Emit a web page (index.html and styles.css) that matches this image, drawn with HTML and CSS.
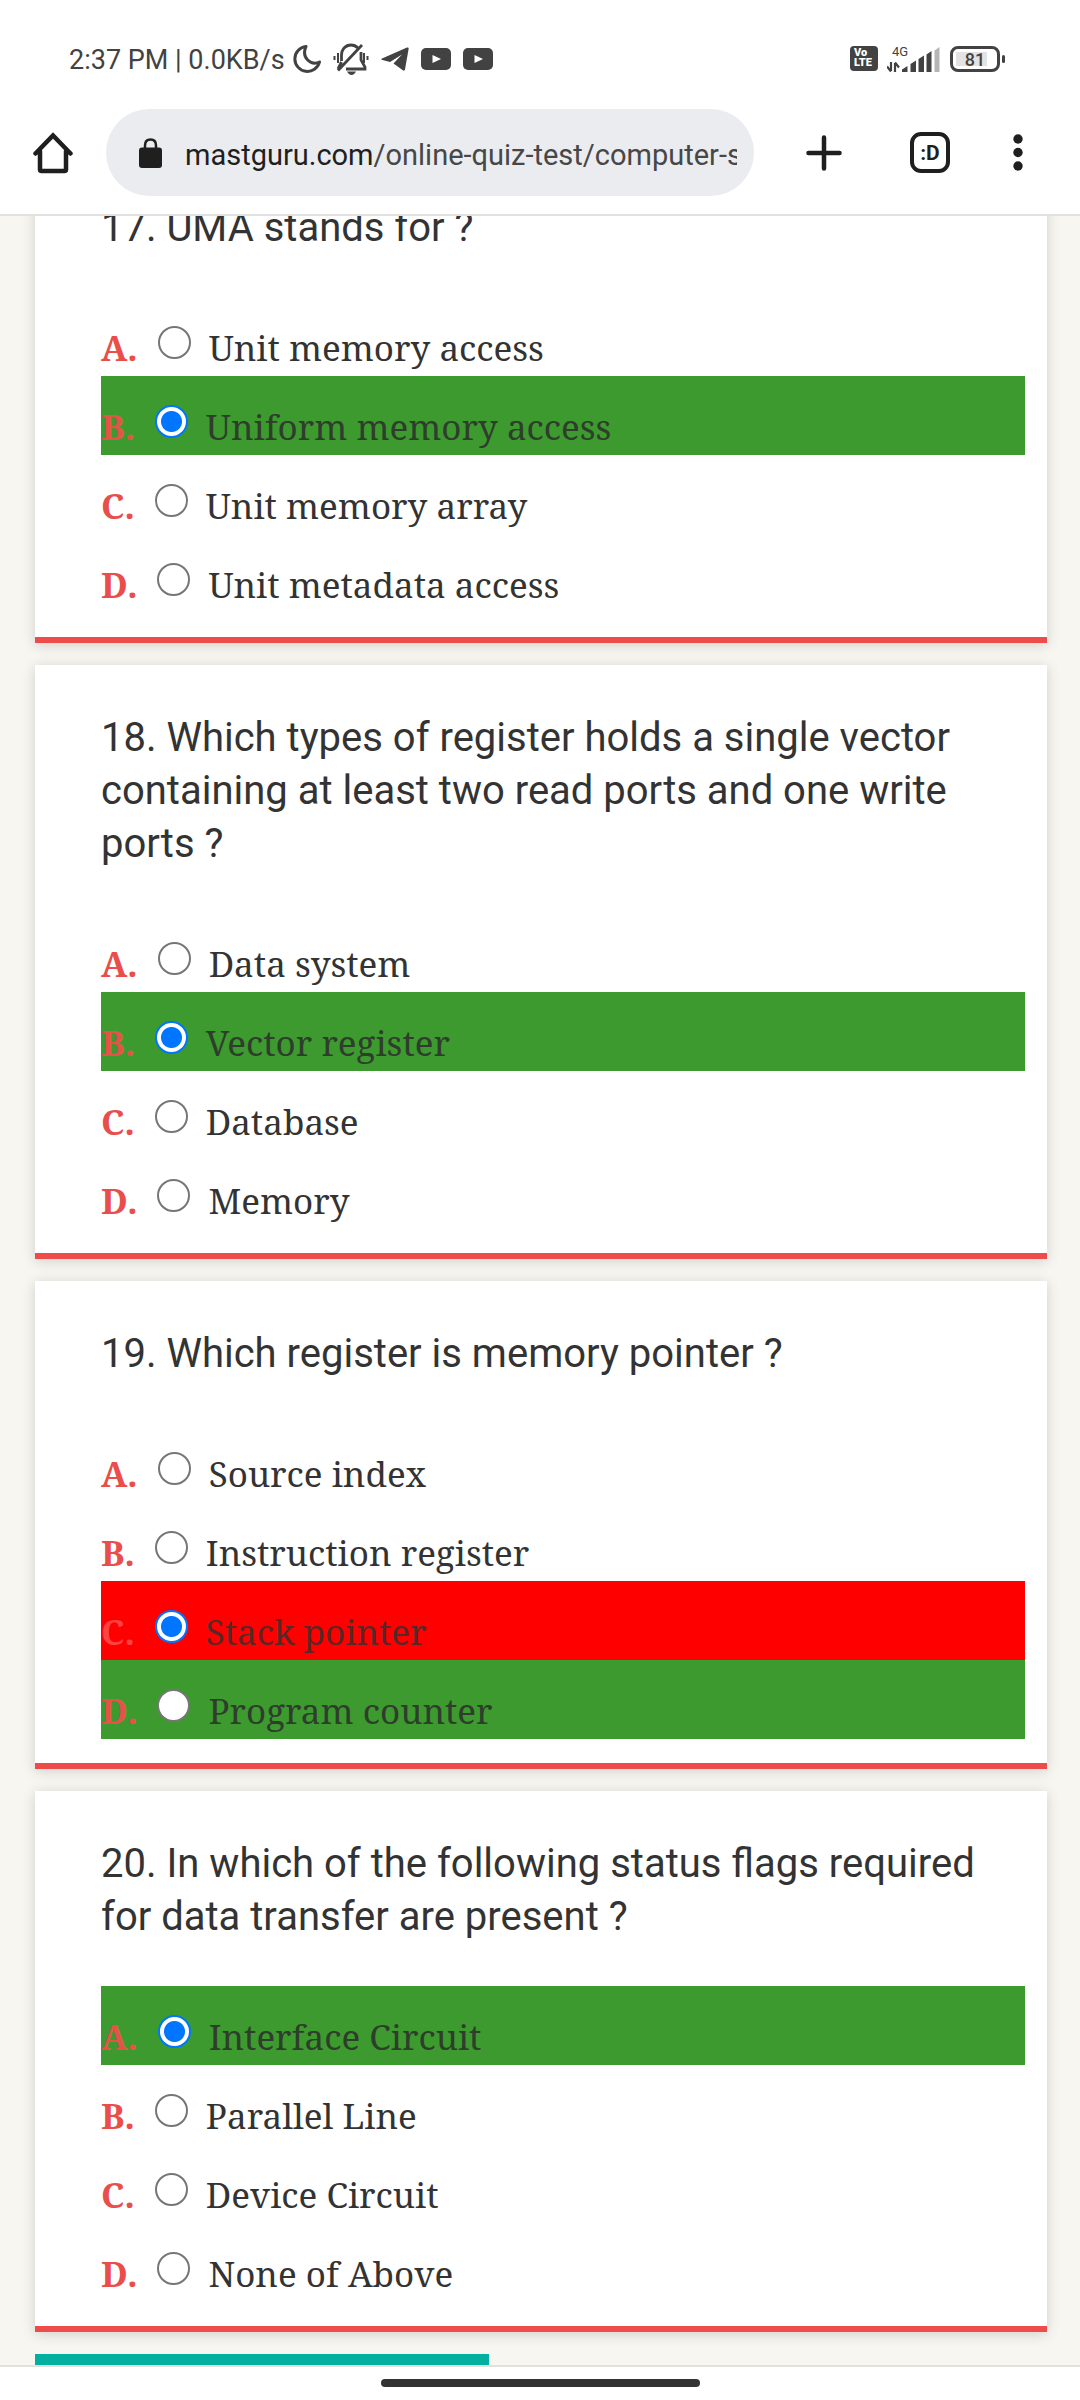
FILE: index.html
```html
<!DOCTYPE html>
<html lang="en">
<head>
<meta charset="utf-8">
<meta name="viewport" content="width=device-width, initial-scale=1">
<title>Computer quiz - mastguru.com</title>
<link rel="stylesheet" href="styles.css">
</head>
<body>
<header class="chrome">
  <div class="status">
    <span class="clock">2:37 PM | 0.0KB/s</span>
    <div class="notices">
      <svg class="moon" width="28" height="30" viewBox="0 0 28 30" aria-hidden="true"><path d="M13 2.500A12.500 12.500 0 1 0 26.500 18C18 22 8 14 13 2.500Z" fill="none" stroke="#424242" stroke-width="3" stroke-linejoin="round"/></svg>
      <svg class="bell" width="36" height="32" viewBox="0 0 36 32" aria-hidden="true"><g fill="none" stroke="#424242" stroke-width="2.800"><path d="M11 5C15 1 21 1 25 5M8.500 18V12Q8.500 8 11 5M28 9V17L32 24V26H13M5 27.500L29 2M5 26L8.500 19"/><path d="M1.500 13V17M5 10V20M31 10V20M34.500 13V17" stroke-width="2"/></g><path d="M14 28.500H23Q21 32 18.500 32T14 28.500Z" fill="#424242"/></svg>
      <svg class="plane" width="28" height="24" viewBox="0 0 28 24" aria-hidden="true"><path d="M1 11.500 26 .6Q28 0 27.600 2L24 22.500Q23.500 24.500 21.500 23L12.500 16.500 21 7.500 9 15 1.500 13Q-.5 12.300 1 11.500Z" fill="#424242"/></svg>
      <svg class="tube" width="30" height="22" viewBox="0 0 30 22" aria-hidden="true"><rect width="30" height="22" rx="5" fill="#424242"/><path d="M11.500 7 20 11l-8.500 4Z" fill="#fff"/></svg>
      <svg class="tube" width="30" height="22" viewBox="0 0 30 22" aria-hidden="true"><rect width="30" height="22" rx="5" fill="#424242"/><path d="M11.500 7 20 11l-8.500 4Z" fill="#fff"/></svg>
    </div>
    <div class="radios">
      <span class="volte"><span>Vo</span><span>LTE</span></span>
      <svg width="54" height="28" viewBox="0 0 54 28" aria-hidden="true"><text x="5" y="11" font-family="Roboto, sans-serif" font-size="13" fill="#424242">4G</text><path d="M4 17V26M0 21.500 4 26.500M8 27V18M12 22.500 8 17.500" fill="none" stroke="#424242" stroke-width="2.200"/><g fill="#424242"><path d="M15 24.500 20.500 21V27H15ZM23.500 19 29 15.500V27H23.500ZM31.500 14 37 10.500V27H31.500ZM39.500 9.500 44.500 6V27H39.500Z"/><path d="M47.500 5.500 52.500 2V27H47.500Z" fill="#b5b5b5"/></g></svg>
      <span class="battery">81</span>
    </div>
  </div>
  <div class="toolbar">
    <button class="tool home" type="button" aria-label="Home"><svg width="40" height="42" viewBox="0 0 40 42"><path d="M2.500 21.500 20 3.500 37.500 21.500M7 19V37.500Q7 39 8.500 39H31.500Q33 39 33 37.500V19" fill="none" stroke="#1f1f1f" stroke-width="4.500" stroke-linecap="round" stroke-linejoin="miter"/></svg></button>
    <a class="address" href="#">
      <svg width="23" height="30" viewBox="0 0 23 30" aria-hidden="true"><rect y="9.500" width="23" height="20.500" rx="3" fill="#1f1f1f"/><path d="M6 11V7.500Q6 1.500 11.500 1.500T17 7.500V11" fill="none" stroke="#1f1f1f" stroke-width="2.500"/></svg>
      <span class="url">mastguru.com<span class="path">/online-quiz-test/computer-science</span></span>
    </a>
    <button class="tool plus" type="button" aria-label="New tab"><svg width="36" height="36" viewBox="0 0 36 36"><path d="M18 2.500V33.500M2.500 18H33.500" stroke="#1f1f1f" stroke-width="4.500" stroke-linecap="round"/></svg></button>
    <button class="tabs" type="button" aria-label="Tabs">:D</button>
    <button class="tool more" type="button" aria-label="More"><svg width="10" height="38" viewBox="0 0 10 38"><g fill="#1f1f1f"><circle cx="5" cy="5" r="4.700"/><circle cx="5" cy="18.500" r="4.700"/><circle cx="5" cy="32" r="4.700"/></g></svg></button>
  </div>
</header>

<main class="page">
  <form class="quiz">
    <section class="card">
      <h2>17. UMA stands for ?</h2>
      <ul>
        <li><label><b>A.</b><input type="radio" name="q17"><span>Unit memory access</span></label></li>
        <li class="right"><label><b>B.</b><input type="radio" name="q17" checked><span>Uniform memory access</span></label></li>
        <li><label><b>C.</b><input type="radio" name="q17"><span>Unit memory array</span></label></li>
        <li><label><b>D.</b><input type="radio" name="q17"><span>Unit metadata access</span></label></li>
      </ul>
    </section>
    <section class="card">
      <h2>18. Which types of register holds a single vector containing at least two read ports and one write ports ?</h2>
      <ul>
        <li><label><b>A.</b><input type="radio" name="q18"><span>Data system</span></label></li>
        <li class="right"><label><b>B.</b><input type="radio" name="q18" checked><span>Vector register</span></label></li>
        <li><label><b>C.</b><input type="radio" name="q18"><span>Database</span></label></li>
        <li><label><b>D.</b><input type="radio" name="q18"><span>Memory</span></label></li>
      </ul>
    </section>
    <section class="card">
      <h2>19. Which register is memory pointer ?</h2>
      <ul>
        <li><label><b>A.</b><input type="radio" name="q19"><span>Source index</span></label></li>
        <li><label><b>B.</b><input type="radio" name="q19"><span>Instruction register</span></label></li>
        <li class="wrong"><label><b>C.</b><input type="radio" name="q19" checked><span>Stack pointer</span></label></li>
        <li class="right"><label><b>D.</b><input type="radio" name="q19"><span>Program counter</span></label></li>
      </ul>
    </section>
    <section class="card">
      <h2>20. In which of the following status flags required for data transfer are present ?</h2>
      <ul>
        <li class="right"><label><b>A.</b><input type="radio" name="q20" checked><span>Interface Circuit</span></label></li>
        <li><label><b>B.</b><input type="radio" name="q20"><span>Parallel Line</span></label></li>
        <li><label><b>C.</b><input type="radio" name="q20"><span>Device Circuit</span></label></li>
        <li><label><b>D.</b><input type="radio" name="q20"><span>None of Above</span></label></li>
      </ul>
    </section>
    <div class="result"></div>
  </form>
</main>

<footer class="gesture"><span></span></footer>
</body>
</html>
```

FILE: styles.css
```css
* { box-sizing: border-box; }

body {
  margin: 0;
  height: 100vh;
  display: flex;
  flex-direction: column;
  background: #f7f6f1;
  color: #333;
  font-family: Roboto, sans-serif;
}

button {
  padding: 0;
  border: 0;
  background: none;
  color: inherit;
  font-family: inherit;
}

svg { display: block; flex: none; }

/* Browser chrome */
.chrome {
  flex: none;
  background: #fff;
  border-bottom: 2px solid #e1e2e0;
}

.status {
  display: flex;
  align-items: center;
  height: 109px;
  padding: 8px 80px 0 69px;
  color: #424242;
}

.clock {
  min-width: 218px;
  font-size: 27px;
  line-height: 32px;
  padding-top: 2px;
  white-space: nowrap;
}

.notices { display: flex; align-items: center; gap: 12px; margin-left: 6px; }

.radios { display: flex; align-items: center; gap: 9px; margin-left: auto; }

.volte {
  display: flex;
  flex-direction: column;
  width: 28px;
  height: 25px;
  padding: 2px 4px;
  border-radius: 4px;
  background: #424242;
  color: #fff;
  font-size: 11px;
  font-weight: 900;
  line-height: 10px;
}

.battery {
  position: relative;
  width: 50px;
  height: 26px;
  border: 3px solid #424242;
  border-radius: 8px;
  background: linear-gradient(#e3e3e3, #e3e3e3) 3px 3px / 31px 14px no-repeat;
  font-size: 18px;
  font-weight: 500;
  line-height: 22px;
  text-align: center;
}

.battery::after {
  content: "";
  position: absolute;
  top: 6px;
  right: -8px;
  width: 3px;
  height: 8px;
  border-radius: 2px;
  background: #424242;
}

.toolbar {
  display: flex;
  align-items: center;
  height: 105px;
  padding: 0 57px 18px 33px;
}

.address {
  display: flex;
  align-items: center;
  flex: 1;
  min-width: 0;
  height: 87px;
  margin: 0 52px 0 33px;
  padding: 0 17px 0 33px;
  gap: 23px;
  border-radius: 44px;
  background: #ebecf0;
  color: #1f1f1f;
  text-decoration: none;
}

.url {
  flex: 1;
  min-width: 0;
  overflow: hidden;
  padding-top: 4px;
  font-size: 29px;
  line-height: 40px;
  white-space: nowrap;
}

.path { color: #474747; }

.tabs {
  width: 40px;
  height: 41px;
  margin: 0 63px 0 68px;
  border: 4px solid #1f1f1f;
  border-radius: 11px;
  color: #1f1f1f;
  font-size: 21px;
  font-weight: 700;
  line-height: 30px;
}

/* Quiz page, scrolled partway down the first question */
.page {
  flex: 1;
  min-height: 0;
  overflow: hidden;
}

.quiz {
  display: flex;
  flex-direction: column;
  gap: 22px;
  margin-top: -61px;
  padding: 0 33px 0 35px;
}

.card {
  padding: 46px 22px 24px 66px;
  border-bottom: 6px solid #ee4b4b;
  background: #fff;
  box-shadow: 0 2px 13px rgba(0, 0, 0, 0.16);
}

.card h2 {
  margin: 0 0 43px;
  font-size: 40px;
  font-weight: 400;
  line-height: 53px;
}

.card ul { margin: 0; padding: 0; list-style: none; }

.card label {
  display: flex;
  align-items: flex-start;
  height: 79px;
  padding-top: 27px;
  font-family: "Noto Serif", "Droid Serif", "DejaVu Serif", serif;
  font-size: 35px;
  line-height: 48px;
}

.card b { color: #e94e4b; }

.card input {
  appearance: none;
  flex: none;
  width: 33px;
  height: 33px;
  margin: 2px 18px 0 20px;
  border: 2px solid #767676;
  border-radius: 50%;
  background: #fff;
}

.card input:checked {
  border-color: #0075ff;
  background: radial-gradient(circle, #0075ff 10px, #fff 11px);
}

.right { background: #3d9a2e; }
.right b { color: #e3534a; }
.right span { color: #2f3d2d; }

.wrong { background: #f00; }
.wrong b { color: #ff4343; }
.wrong span { color: #5a2727; }

.result {
  width: 454px;
  height: 80px;
  background: #03b09f;
}

/* System gesture bar */
.gesture {
  flex: none;
  display: flex;
  justify-content: center;
  height: 35px;
  padding-top: 12px;
  border-top: 2px solid #e1e2e0;
  background: #fff;
}

.gesture span {
  width: 319px;
  height: 8px;
  border-radius: 4px;
  background: #333;
}
```
